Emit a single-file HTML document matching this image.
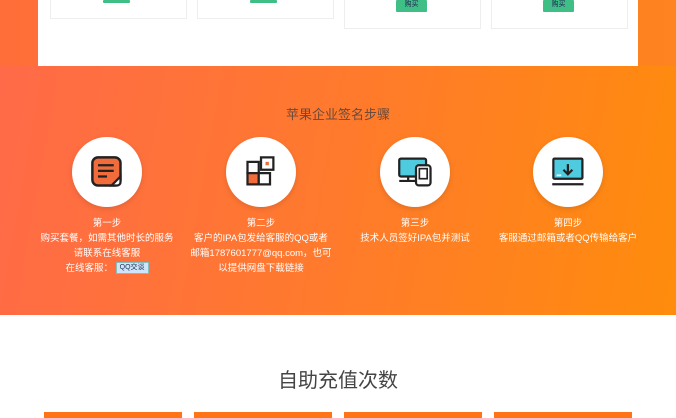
<!DOCTYPE html>
<html><head><meta charset="utf-8"><style>
*{margin:0;padding:0;box-sizing:border-box}
body{width:676px;height:418px;overflow:hidden;font-family:"Liberation Sans","Noto Sans CJK SC",sans-serif;position:relative;background:#fff}
.top{position:absolute;left:0;top:0;width:676px;height:67px;background:linear-gradient(90deg,#ff6e38,#ff8320)}
.panel{position:absolute;left:38px;top:0;width:600px;height:66px;background:#fff}
.card{position:absolute;background:#fff;border:1px solid #eee;border-top:none}
.btn{position:absolute;background:#3fbf86;color:#225;font-size:7px;text-align:center;border-radius:1px}
.steps{position:absolute;left:0;top:66px;width:676px;height:249px;background:linear-gradient(100deg,#ff6a48 0%,#ff7a2c 50%,#ff8c0c 100%)}
.title{position:absolute;top:104px;left:0;width:676px;text-align:center;font-size:13px;color:#6b4a3a}
.circ{position:absolute;width:70px;height:70px;border-radius:50%;background:#fff;box-shadow:0 2px 6px rgba(0,0,0,.12)}
.circ svg{position:absolute;left:17px;top:17px}
.st{position:absolute;width:160px;text-align:center;color:#fff;font-size:9.5px;line-height:15px}
.h2{position:absolute;top:364px;width:676px;text-align:center;font-size:20px;color:#444}
.bar{position:absolute;top:412px;height:6px;width:138px;background:#ff7417}
</style></head><body>
<div class="top"></div>
<div class="panel"></div>
<div class="card" style="left:50px;top:0;width:137px;height:19px"></div>
<div class="card" style="left:197px;top:0;width:137px;height:19px"></div>
<div class="card" style="left:344px;top:0;width:137px;height:29px"></div>
<div class="card" style="left:491px;top:0;width:137px;height:29px"></div>
<div class="btn" style="left:103px;top:0;width:27px;height:3px"></div>
<div class="btn" style="left:250px;top:0;width:27px;height:3px"></div>
<div class="btn" style="left:396px;top:0;width:31px;height:12px;line-height:9px">购买</div>
<div class="btn" style="left:543px;top:0;width:31px;height:12px;line-height:9px">购买</div>

<div class="steps"></div>
<div class="title">苹果企业签名步骤</div>

<div class="circ" style="left:72px;top:137px"><svg width="36" height="36" viewBox="0 0 32 32"><rect x="3" y="3" width="25" height="25" rx="5" fill="#f26b3a" stroke="#222" stroke-width="2.2"/><path d="M8 10h14M8 15h14M8 20h8" stroke="#222" stroke-width="2"/><path d="M20 28 28 20v5a3 3 0 0 1-3 3z" fill="#fff" stroke="#222" stroke-width="2"/></svg></div>
<div class="circ" style="left:226px;top:137px"><svg width="36" height="36" viewBox="0 0 32 32"><rect x="4" y="7" width="10" height="10" fill="#fff" stroke="#222" stroke-width="2"/><rect x="16" y="3" width="11" height="11" fill="#fff" stroke="#222" stroke-width="2"/><rect x="20" y="7" width="3" height="3" fill="#f26b3a"/><rect x="4" y="17" width="10" height="10" fill="#f26b3a" stroke="#222" stroke-width="2"/><rect x="14" y="17" width="10" height="10" fill="#fff" stroke="#222" stroke-width="2"/></svg></div>
<div class="circ" style="left:380px;top:137px"><svg width="38" height="36" viewBox="0 0 34 32"><rect x="2" y="4" width="24" height="16" rx="1.5" fill="#4fcbe0" stroke="#222" stroke-width="2"/><path d="M2 24h20M10 20v4" stroke="#222" stroke-width="2"/><rect x="17" y="10" width="13" height="18" rx="2.5" fill="#fff" stroke="#222" stroke-width="2"/><rect x="20" y="13" width="7" height="9" fill="#fff" stroke="#222" stroke-width="1.5"/></svg></div>
<div class="circ" style="left:533px;top:137px"><svg width="38" height="36" viewBox="0 0 34 32"><rect x="3" y="4" width="26" height="18" rx="1" fill="#4fcbe0" stroke="#222" stroke-width="2"/><path d="M2 27h28M16 9v9M12 14l4 4 4-4" stroke="#222" stroke-width="2" fill="none"/><path d="M6 19h4" stroke="#fff" stroke-width="1.5"/></svg></div>

<div class="st" style="left:27px;top:216px">第一步<br>购买套餐，如需其他时长的服务<br>请联系在线客服<br>在线客服： <span style="display:inline-block;background:#cfe6fa;border:1px solid #8bb;color:#235;font-size:7px;line-height:10px;padding:0 3px;vertical-align:middle">QQ交谈</span></div>
<div class="st" style="left:181px;top:216px">第二步<br>客户的IPA包发给客服的QQ或者<br>邮箱1787601777@qq.com，也可<br>以提供网盘下载链接</div>
<div class="st" style="left:335px;top:216px">第三步<br>技术人员签好IPA包并测试</div>
<div class="st" style="left:488px;top:216px">第四步<br>客服通过邮箱或者QQ传输给客户</div>

<div class="h2">自助充值次数</div>
<div class="bar" style="left:44px"></div>
<div class="bar" style="left:194px"></div>
<div class="bar" style="left:344px"></div>
<div class="bar" style="left:494px"></div>
</body></html>
